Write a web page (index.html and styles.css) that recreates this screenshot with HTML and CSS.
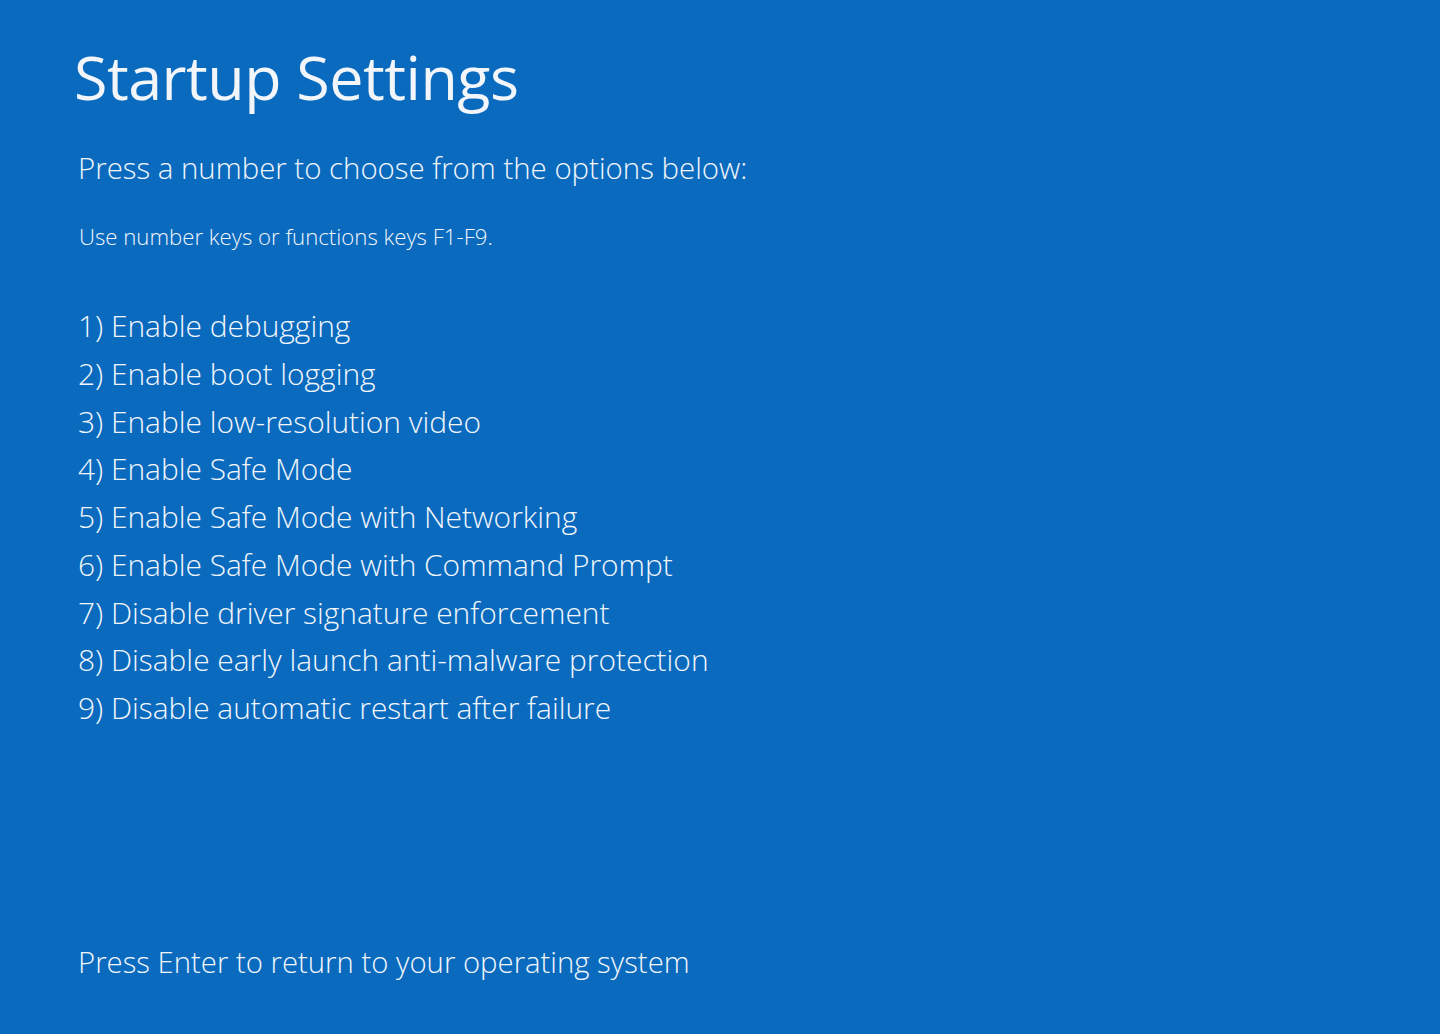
FILE: index.html
```html
<!DOCTYPE html>
<html lang="en">
<head>
<meta charset="utf-8">
<title>Startup Settings</title>
<link rel="stylesheet" href="styles.css">
</head>
<body>
<main class="screen">
  <h1 class="title">Startup Settings</h1>
  <p class="lead">Press a number to choose from the options below:</p>
  <p class="hint">Use number keys or functions keys F1-F9.</p>
  <ol class="options">
    <li>1) Enable debugging</li>
    <li>2) Enable boot logging</li>
    <li>3) Enable low-resolution video</li>
    <li>4) Enable Safe Mode</li>
    <li>5) Enable Safe Mode with Networking</li>
    <li>6) Enable Safe Mode with Command Prompt</li>
    <li>7) Disable driver signature enforcement</li>
    <li>8) Disable early launch anti-malware protection</li>
    <li>9) Disable automatic restart after failure</li>
  </ol>
  <p class="footer">Press Enter to return to your operating system</p>
</main>
</body>
</html>
```

FILE: styles.css
```css
html, body {
  margin: 0;
  padding: 0;
  height: 100%;
}
body {
  background: #0a6abe;
  color: #f2f6fb;
  font-family: "Open Sans", "Noto Sans", sans-serif;
  font-weight: 300;
}
.screen {
  height: 1034px;
  box-sizing: border-box;
  padding: 32px 0 0 78px;
  display: flex;
  flex-direction: column;
}
.title {
  margin: 0 0 0 -4px;
  font-size: 61px;
  font-weight: 400;
  line-height: 90px;
  letter-spacing: -0.5px;
}
.lead {
  margin: 26px 0 0 0;
  font-size: 29.4px;
  line-height: 40px;
}
.hint {
  margin: 34px 0 0 1px;
  font-size: 22.2px;
  line-height: 30px;
}
.options {
  list-style: none;
  margin: 50px 0 0 0;
  padding: 0;
}
.options li {
  font-size: 29.9px;
  line-height: 47.75px;
}
.footer {
  margin: auto 0 52px 0;
  font-size: 29.3px;
  line-height: 40px;
}
```
